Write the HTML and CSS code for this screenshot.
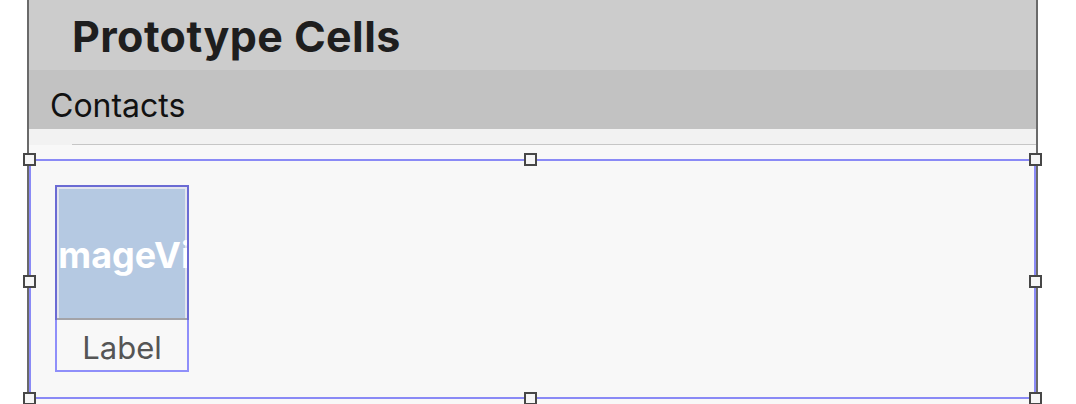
FILE: index.html
```html
<!DOCTYPE html>
<html>
<head>
<meta charset="utf-8">
<link rel="stylesheet" href="styles.css">
</head>
<body>
<div class="scene">
  <div class="title">Prototype Cells</div>
  <div class="section">Contacts</div>
  <div class="strip"><div class="sep"></div></div>
  <div class="gap"></div>
  <div class="cell">
    <div class="stack">
      <div class="imageview"><span class="ph">UIImageView</span></div>
      <div class="label">Label</div>
    </div>
    <span class="handle h-tl"></span>
    <span class="handle h-tc"></span>
    <span class="handle h-tr"></span>
    <span class="handle h-ml"></span>
    <span class="handle h-mr"></span>
    <span class="handle h-bl"></span>
    <span class="handle h-bc"></span>
    <span class="handle h-br"></span>
  </div>
</div>
</body>
</html>
```
FILE: styles.css
```css
html, body {
  margin: 0;
  padding: 0;
  background: #ffffff;
  width: 1076px;
  height: 404px;
  overflow: hidden;
  font-family: Inter, "Liberation Sans", sans-serif;
}
.scene {
  margin-left: 27px;
  width: 1007px;
  height: 404px;
  border-left: 2px solid #6a6a6a;
  border-right: 2px solid #6a6a6a;
  background: #f8f8f8;
  display: flex;
  flex-direction: column;
}
.title {
  height: 70px;
  background: #cccccc;
  color: #1e1e1e;
  font-weight: 700;
  font-size: 43px;
  line-height: 72px;
  padding-left: 43px;
  letter-spacing: 0.4px;
  box-sizing: border-box;
}
.section {
  height: 59px;
  background: #c2c2c2;
  color: #111;
  font-size: 32px;
  line-height: 72px;
  padding-left: 21px;
  box-sizing: border-box;
}
.strip {
  height: 16px;
  background: #f2f2f2;
  display: flex;
  flex-direction: column;
  justify-content: flex-end;
}
.sep {
  height: 1px;
  margin-left: 43px;
  background: #c6c6c6;
}
.gap {
  height: 14px;
  background: #f8f8f8;
}
.cell {
  position: relative;
  height: 240px;
  box-sizing: border-box;
  border: 2px solid #8a8af6;
  background: #f8f8f8;
  padding: 24px;
}
.stack {
  width: 134px;
  display: flex;
  flex-direction: column;
}
.imageview {
  height: 135px;
  box-sizing: border-box;
  border: 2px solid #6b6bd4;
  border-bottom: none;
  box-shadow: inset 0 0 0 2px #e3e5ee;
  background: #b5c9e2;
  display: flex;
  align-items: center;
  justify-content: center;
  overflow: hidden;
  position: relative;
}
.imageview::after {
  content: "";
  position: absolute;
  left: 0;
  right: 0;
  bottom: 0;
  height: 2px;
  background: #a3a3a8;
}
.ph {
  flex: none;
  white-space: nowrap;
  color: #ffffff;
  font-weight: 700;
  font-size: 36px;
  line-height: 1;
  margin-top: 2px;
  margin-left: 10px;
}
.label {
  height: 52px;
  box-sizing: border-box;
  border: 2px solid #8f8ffa;
  border-top: none;
  color: #555555;
  font-size: 31px;
  line-height: 56px;
  text-align: center;
}
.handle {
  position: absolute;
  width: 9px;
  height: 9px;
  border: 2px solid #474747;
  background: #f6f6f6;
}
.h-tl { left: -8px; top: -8px; }
.h-tc { left: 493px; top: -8px; }
.h-tr { right: -8px; top: -8px; }
.h-ml { left: -8px; top: 114px; }
.h-mr { right: -8px; top: 114px; }
.h-bl { left: -8px; bottom: -8px; }
.h-bc { left: 493px; bottom: -8px; }
.h-br { right: -8px; bottom: -8px; }
```
